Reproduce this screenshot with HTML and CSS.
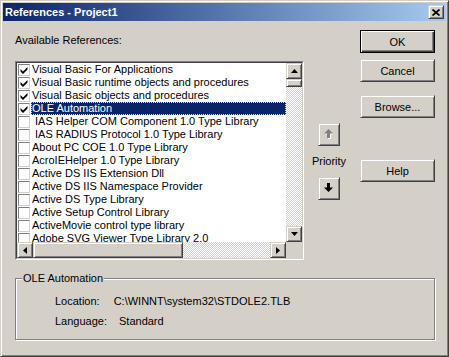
FILE: index.html
```html
<!DOCTYPE html>
<html lang="en">
<head>
    <meta charset="UTF-8">
    <title>References - Project1</title>
    <link rel="stylesheet" href="styles.css">
</head>
<body>
    <div class="window">
        <div class="titlebar">
            <span class="title">References - Project1</span>
            <div class="close raised">
                <svg width="8" height="7" viewBox="0 0 8 7"><path d="M0.5 0.5 L7.5 6.5 M7.5 0.5 L0.5 6.5" stroke="#000" stroke-width="1.7"/></svg>
            </div>
        </div>

        <div class="content">
            <div class="top">
                <div class="left">
                    <div class="caption">Available References:</div>
                    <div class="listbox">
                        <div class="listbox-inner">
                            <div class="items">
                                <div class="item"><span class="box"><svg class="check" width="8" height="8" viewBox="0 0 8 8"><path d="M0.5 3 L3 5.5 L7.5 1 L7.5 3.5 L3 8 L0.5 5.5 Z" fill="#000"/></svg></span><span class="label">Visual Basic For Applications</span></div>
                                <div class="item"><span class="box"><svg class="check" width="8" height="8" viewBox="0 0 8 8"><path d="M0.5 3 L3 5.5 L7.5 1 L7.5 3.5 L3 8 L0.5 5.5 Z" fill="#000"/></svg></span><span class="label">Visual Basic runtime objects and procedures</span></div>
                                <div class="item"><span class="box"><svg class="check" width="8" height="8" viewBox="0 0 8 8"><path d="M0.5 3 L3 5.5 L7.5 1 L7.5 3.5 L3 8 L0.5 5.5 Z" fill="#000"/></svg></span><span class="label">Visual Basic objects and procedures</span></div>
                                <div class="item"><span class="box"><svg class="check" width="8" height="8" viewBox="0 0 8 8"><path d="M0.5 3 L3 5.5 L7.5 1 L7.5 3.5 L3 8 L0.5 5.5 Z" fill="#000"/></svg></span><span class="label selected">OLE Automation</span></div>
                                <div class="item"><span class="box"></span><span class="label"> IAS Helper COM Component 1.0 Type Library</span></div>
                                <div class="item"><span class="box"></span><span class="label"> IAS RADIUS Protocol 1.0 Type Library</span></div>
                                <div class="item"><span class="box"></span><span class="label">About PC COE 1.0 Type Library</span></div>
                                <div class="item"><span class="box"></span><span class="label">AcroIEHelper 1.0 Type Library</span></div>
                                <div class="item"><span class="box"></span><span class="label">Active DS IIS Extension Dll</span></div>
                                <div class="item"><span class="box"></span><span class="label">Active DS IIS Namespace Provider</span></div>
                                <div class="item"><span class="box"></span><span class="label">Active DS Type Library</span></div>
                                <div class="item"><span class="box"></span><span class="label">Active Setup Control Library</span></div>
                                <div class="item"><span class="box"></span><span class="label">ActiveMovie control type library</span></div>
                                <div class="item"><span class="box"></span><span class="label">Adobe SVG Viewer Type Library 2.0</span></div>
                            </div>
                            <div class="vscroll">
                                <div class="sbtn raised"><svg width="7" height="4" viewBox="0 0 7 4"><path d="M0 4 L3.5 0 L7 4 Z" fill="#000"/></svg></div>
                                <div class="vthumb raised"></div>
                                <div class="track"></div>
                                <div class="sbtn raised"><svg width="7" height="4" viewBox="0 0 7 4"><path d="M0 0 L3.5 4 L7 0 Z" fill="#000"/></svg></div>
                            </div>
                            <div class="hscroll">
                                <div class="sbtn raised"><svg width="4" height="7" viewBox="0 0 4 7"><path d="M4 0 L0 3.5 L4 7 Z" fill="#000"/></svg></div>
                                <div class="hthumb raised"></div>
                                <div class="track"></div>
                                <div class="sbtn raised"><svg width="4" height="7" viewBox="0 0 4 7"><path d="M0 0 L4 3.5 L0 7 Z" fill="#000"/></svg></div>
                            </div>
                            <div class="corner"></div>
                        </div>
                    </div>
                </div>

                <div class="priority">
                    <div class="arrow-btn raised">
                        <svg width="10" height="11" viewBox="0 0 10 11">
                            <path d="M1 5.5 L5 1.5 L9 5.5 L7 5.5 L7 10 L4 10 L4 5.5 Z" fill="#fff"/>
                            <path d="M0 4.5 L4.5 0 L9 4.5 L6 4.5 L6 9 L3 9 L3 4.5 Z" fill="#808080"/>
                        </svg>
                    </div>
                    <div class="priority-label">Priority</div>
                    <div class="arrow-btn raised">
                        <svg width="10" height="11" viewBox="0 0 10 11"><path d="M0 4.5 L4.5 9 L9 4.5 L6 4.5 L6 0 L3 0 L3 4.5 Z" fill="#000"/></svg>
                    </div>
                </div>

                <div class="buttons">
                    <div class="btn default">OK</div>
                    <div class="btn raised btn-cancel">Cancel</div>
                    <div class="btn raised btn-browse">Browse...</div>
                    <div class="btn raised btn-help">Help</div>
                </div>
            </div>

            <fieldset class="group">
                <legend>OLE Automation</legend>
                <div class="details">
                    <div class="row"><span>Location:</span><span class="value-location">C:\WINNT\system32\STDOLE2.TLB</span></div>
                    <div class="row"><span>Language:</span><span class="value-language">Standard</span></div>
                </div>
            </fieldset>
        </div>
    </div>
</body>
</html>
```

FILE: styles.css
```css
html, body {
    margin: 0;
    background: #d4d0c8;
}
body {
    font-family: "Liberation Sans", Arial, sans-serif;
    font-size: 11px;
    color: #000;
}
.window {
    width: 449px;
    height: 357px;
    box-sizing: border-box;
    border: 1px solid;
    border-color: #d4d0c8 #404040 #404040 #d4d0c8;
    box-shadow: inset 1px 1px #fff, inset -1px -1px #808080;
    padding: 2px;
    background: #d4d0c8;
}
.titlebar {
    height: 18px;
    display: flex;
    align-items: center;
    justify-content: space-between;
    background: linear-gradient(90deg, #0a246a, #a6caf0);
    padding-left: 2px;
}
.title {
    color: #fff;
    font-weight: bold;
    font-size: 11px;
}
.raised {
    background: #d4d0c8;
    box-sizing: border-box;
    border: 1px solid;
    border-color: #d4d0c8 #404040 #404040 #d4d0c8;
    box-shadow: inset 1px 1px #fff, inset -1px -1px #808080;
}
.close {
    width: 16px;
    height: 14px;
    margin-right: 2px;
    display: flex;
    align-items: center;
    justify-content: center;
}
.content {
    padding: 0 11px 0 12px;
}
.top {
    display: flex;
    align-items: flex-start;
}
.left {
    width: 289px;
}
.caption {
    margin-top: 13px;
    line-height: 13px;
    height: 13px;
}
/* список со скроллбарами */
.listbox {
    margin-top: 14px;
    height: 199px;
    box-sizing: border-box;
    border: 1px solid;
    border-color: #808080 #fff #fff #808080;
}
.listbox-inner {
    height: 100%;
    box-sizing: border-box;
    border: 1px solid;
    border-color: #404040 #d4d0c8 #d4d0c8 #404040;
    display: grid;
    grid-template-columns: 1fr 16px;
    grid-template-rows: 1fr 16px;
    background: #fff;
}
.items {
    overflow: hidden;
    background: #fff;
}
.item {
    height: 13px;
    display: flex;
    align-items: center;
}
.box {
    width: 12px;
    height: 12px;
    box-sizing: border-box;
    margin: 0 1px;
    border: 1px solid;
    border-color: #808080 #d4d0c8 #d4d0c8 #808080;
    background: #fff;
    flex: none;
    display: flex;
    align-items: center;
    justify-content: center;
}
.check {
    display: block;
}
.label {
    flex: 1;
    white-space: pre;
    height: 13px;
    line-height: 13px;
    box-sizing: border-box;
    padding: 0 1px;
}
.label.selected {
    background: #0a246a;
    color: #fff;
    border: 1px dotted #f5db95;
    line-height: 11px;
    padding-left: 0;
}
.track {
    flex: 1;
    background: repeating-conic-gradient(#fff 0 25%, #d4d0c8 0 50%) 0 0 / 2px 2px;
}
.vscroll {
    display: flex;
    flex-direction: column;
}
.hscroll {
    display: flex;
}
.sbtn {
    width: 16px;
    height: 16px;
    flex: none;
    display: flex;
    align-items: center;
    justify-content: center;
}
.vthumb {
    height: 8px;
    flex: none;
}
.hthumb {
    width: 150px;
    flex: none;
}
.corner {
    background: #d4d0c8;
}
/* кнопки приоритета */
.priority {
    width: 34px;
    margin-left: 8px;
    display: flex;
    flex-direction: column;
    align-items: center;
}
.arrow-btn {
    width: 22px;
    height: 23px;
    display: flex;
    align-items: center;
    justify-content: center;
}
.priority .arrow-btn:first-child {
    margin-top: 102px;
}
.priority-label {
    line-height: 13px;
    margin: 9px 0;
}
.buttons {
    width: 75px;
    margin-left: 14px;
    display: flex;
    flex-direction: column;
}
.btn {
    height: 23px;
    box-sizing: border-box;
    display: flex;
    align-items: center;
    justify-content: center;
}
.btn.default {
    margin-top: 9px;
    border: 1px solid #000;
    box-shadow: inset 1px 1px #fff, inset -1px -1px #404040, inset -2px -2px #808080;
}
.btn-cancel {
    margin-top: 6px;
}
.btn-browse {
    margin-top: 13px;
}
.btn-help {
    margin-top: 41px;
}
/* рамка с описанием */
.group {
    margin: 12px 0 0 0;
    padding: 10px 0 11px 0;
    border: 1px solid #808080;
    box-shadow: inset 1px 1px #fff, 1px 1px 0 #fff;
    width: 420px;
    box-sizing: border-box;
    min-inline-size: 0;
}
.group legend {
    margin-left: 6px;
    padding: 0 1px;
    line-height: 13px;
    background: #d4d0c8;
}
.details {
    padding-left: 39px;
    display: flex;
    flex-direction: column;
    gap: 7px;
}
.row {
    line-height: 13px;
}
.value-location {
    margin-left: 14px;
}
.value-language {
    margin-left: 12px;
}
```
